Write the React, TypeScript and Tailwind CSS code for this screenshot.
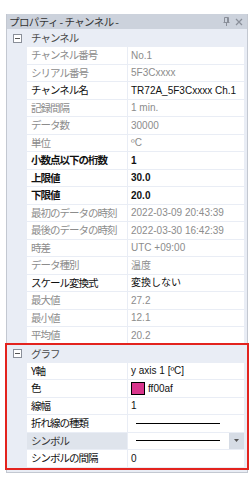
import type { ReactNode } from 'react'

type Row = {
  name: string
  value?: ReactNode
  readOnly?: boolean
  bold?: boolean
  selected?: boolean
  dropdown?: boolean
}

const CHANNEL_ROWS: Row[] = [
  { name: 'チャンネル番号', value: 'No.1', readOnly: true },
  { name: 'シリアル番号', value: '5F3Cxxxx', readOnly: true },
  { name: 'チャンネル名', value: 'TR72A_5F3Cxxxx Ch.1' },
  { name: '記録間隔', value: '1 min.', readOnly: true },
  { name: 'データ数', value: '30000', readOnly: true },
  { name: '単位', value: 'ºC', readOnly: true },
  { name: '小数点以下の桁数', value: '1', bold: true },
  { name: '上限値', value: '30.0', bold: true },
  { name: '下限値', value: '20.0', bold: true },
  { name: '最初のデータの時刻', value: '2022-03-09 20:43:39', readOnly: true },
  { name: '最後のデータの時刻', value: '2022-03-30 16:42:39', readOnly: true },
  { name: '時差', value: 'UTC +09:00', readOnly: true },
  { name: 'データ種別', value: '温度', readOnly: true },
  { name: 'スケール変換式', value: '変換しない' },
  { name: '最大値', value: '27.2', readOnly: true },
  { name: '最小値', value: '12.1', readOnly: true },
  { name: '平均値', value: '20.2', readOnly: true },
]

const LineSample = () => <div className="ml-[5px] h-px w-[84px] bg-black" />

const GRAPH_ROWS: Row[] = [
  { name: 'Y軸', value: 'y axis 1 [ºC]' },
  {
    name: '色',
    value: (
      <span className="flex items-center gap-[3px]">
        <span className="h-[13px] w-[14px] border border-black bg-[#d9368c]" />
        ff00af
      </span>
    ),
  },
  { name: '線幅', value: '1' },
  { name: '折れ線の種類', value: <LineSample /> },
  { name: 'シンボル', value: <LineSample />, selected: true, dropdown: true },
  { name: 'シンボルの間隔', value: '0' },
]

const jp = { fontFamily: '"Noto Sans CJK JP", sans-serif' }
const latin = { fontFamily: '"Liberation Sans", "Noto Sans CJK JP", sans-serif' }

function Category({ label }: { label: string }) {
  return (
    <div className="flex h-[18px] items-center bg-[#e9edf5]">
      <span className="ml-[6px] flex h-[9px] w-[9px] items-center justify-center border border-[#8a8f99] bg-white">
        <span className="h-px w-[5px] bg-[#555]" />
      </span>
      <span className="ml-[9px] text-[10.5px] tracking-[-1px] text-[#4a4a4a]" style={jp}>
        {label}
      </span>
    </div>
  )
}

function PropRow({ row }: { row: Row }) {
  const color = row.readOnly ? 'text-[#8c8c8c]' : 'text-[#111]'
  const weight = row.bold ? 'font-semibold' : ''
  return (
    <div className="flex h-[17.5px] bg-[#e9edf5] pr-[3px]">
      <div className="w-[20px] shrink-0" />
      <div
        className={`mb-px flex w-[100px] shrink-0 items-center pl-[4px] text-[10.5px] tracking-[-1px] ${color} ${weight} ${row.selected ? 'bg-[#dfe4ec] text-[#333]' : 'bg-white'}`}
        style={jp}
      >
        {row.name}
      </div>
      <div className="mb-px ml-px flex min-w-0 flex-1 items-center bg-white">
        <div
          className={`flex min-w-0 flex-1 items-center whitespace-nowrap pl-[3px] text-[10px] ${color} ${weight}`}
          style={latin}
        >
          {row.value}
        </div>
        {row.dropdown && (
          <div className="flex h-full w-[15px] items-center justify-center bg-[#d6dce5]">
            <svg width="5" height="3" viewBox="0 0 5 3">
              <path d="M0 0h5L2.5 3z" fill="#555" />
            </svg>
          </div>
        )}
      </div>
    </div>
  )
}

export default function App() {
  return (
    <div className="h-[489px] w-[251px] bg-white pl-[6px] pt-[14px]">
      <div className="w-[242px] border-x border-b border-[#c3c8d1] bg-[#e9edf5] pb-[4px]">
        <div className="flex h-[15px] items-center justify-between bg-[#ccd2dc] pl-[2px] pr-[4px]">
          <span className="text-[10.5px] tracking-[-0.6px] text-[#333]" style={jp}>
            プロパティ - チャンネル -
          </span>
          <span className="flex items-center gap-[5px] text-[#8a8f99]">
            <svg width="7" height="9" viewBox="0 0 7 9">
              <path d="M1.5 0.5h4v5h-4z M0.5 5.5h6 M3.5 5.5v3.5 M4.5 1v4" stroke="#8a8f99" fill="none" />
            </svg>
            <svg width="8" height="8" viewBox="0 0 8 8">
              <path d="M1 1l6 6M7 1l-6 6" stroke="#8a8f99" strokeWidth="1.2" />
            </svg>
          </span>
        </div>
        <Category label="チャンネル" />
        {CHANNEL_ROWS.map((r) => (
          <PropRow key={r.name} row={r} />
        ))}
        <div className="outline-2 outline-[#e3231e]">
          <Category label="グラフ" />
          {GRAPH_ROWS.map((r) => (
            <PropRow key={r.name} row={r} />
          ))}
        </div>
      </div>
    </div>
  )
}
